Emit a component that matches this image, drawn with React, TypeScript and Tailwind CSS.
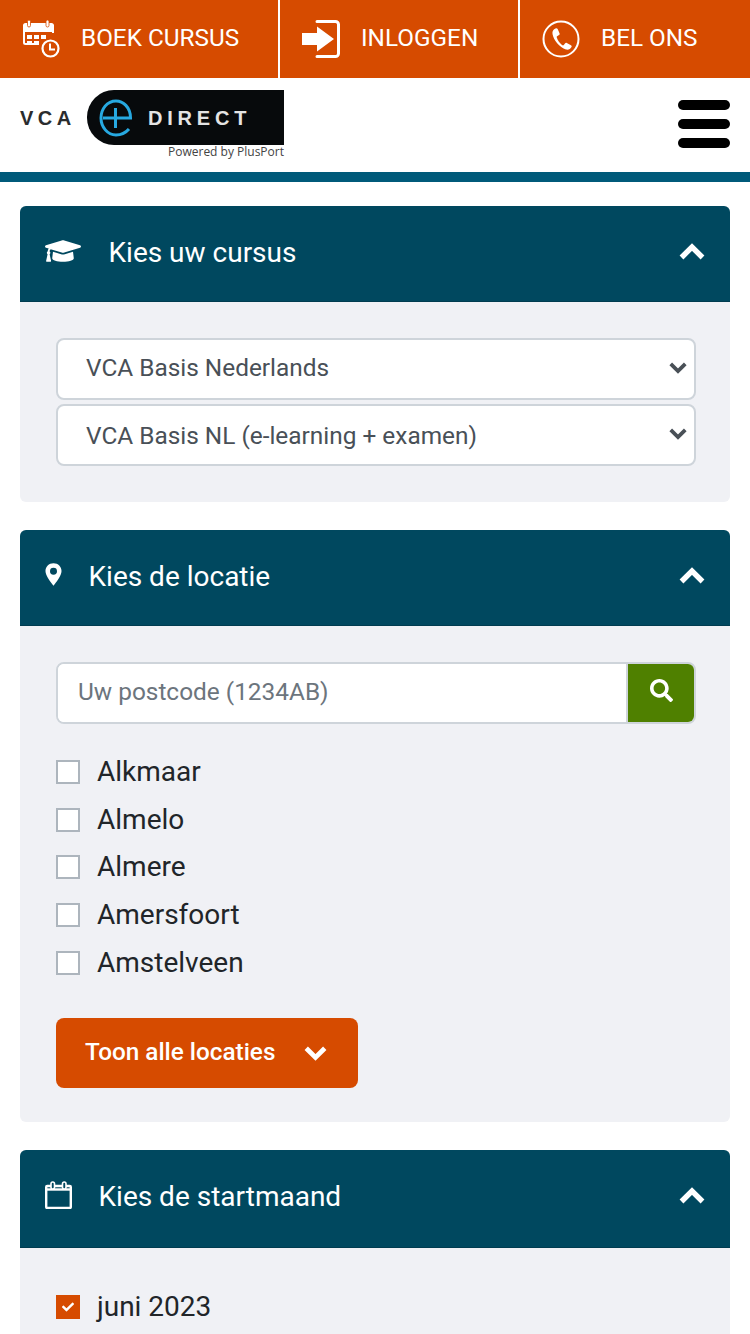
import type { ReactNode } from 'react'
import { FaCheck, FaSearch, FaGraduationCap } from 'react-icons/fa'

function Chevron({ direction, className }: { direction: 'up' | 'down'; className: string }) {
  const d = direction === 'up' ? 'M2.500 14.500L13 4L23.500 14.500' : 'M2.500 2.500L13 13L23.500 2.500'
  return (
    <svg viewBox="0 0 26 17" fill="none" className={className}>
      <path d={d} stroke="currentColor" strokeWidth="5.400" />
    </svg>
  )
}

function CalendarClockIcon() {
  return (
    <svg width="38" height="38" viewBox="0 0 38 38" fill="none" className="shrink-0">
      <path d="M16 24H3.5A1.5 1.5 0 0 1 2 22.5V5.5A1.5 1.5 0 0 1 3.5 4H29.500A1.500 1.500 0 0 1 31 5.500V13" stroke="white" strokeWidth="2" />
      <rect x="1" y="5" width="31" height="7" fill="white" />
      <rect x="5.500" y="0" width="3" height="7" rx="1.500" fill="white" stroke="#d64b00" strokeWidth="0.8" />
      <rect x="24" y="0" width="3" height="7" rx="1.500" fill="white" stroke="#d64b00" strokeWidth="0.8" />
      <rect x="5" y="15" width="5" height="4" fill="white" />
      <rect x="12" y="15" width="5" height="4" fill="white" />
      <rect x="19" y="15" width="5" height="4" fill="white" />
      <rect x="5" y="21" width="5" height="4" fill="white" />
      <rect x="12" y="21" width="5" height="4" fill="white" />
      <circle cx="28.500" cy="28.500" r="8" stroke="white" strokeWidth="2.200" fill="#d64b00" />
      <path d="M28 23.500V29.500H33" stroke="white" strokeWidth="2" />
    </svg>
  )
}

function LoginIcon() {
  return (
    <svg width="38" height="38" viewBox="0 0 38 38" fill="none" className="shrink-0">
      <path d="M15 1.500H33.500A3 3 0 0 1 36.500 4.500V33.500A3 3 0 0 1 33.500 36.500H15" stroke="white" strokeWidth="3" strokeLinecap="round" />
      <path d="M0 13H15V6.500L32 19L15 31.500V25H0Z" fill="white" />
    </svg>
  )
}

function PhoneCircleIcon() {
  return (
    <svg width="38" height="38" viewBox="0 0 38 38" fill="none" className="shrink-0">
      <circle cx="19" cy="19" r="17.500" stroke="white" strokeWidth="2" />
      <path d="M13.500 8.500C11.500 9.500 10 11 10.500 14C11.500 20 17.500 27.500 24 29.500C26.500 30 28.500 29 29.500 27C30 26 29.500 25.500 28.500 25L24.800 23C24 22.600 23.500 22.800 23 23.500L21.800 25C21.300 25.500 20.800 25.500 20 25C17.500 23 15.500 20 14.800 17.500C14.600 16.800 14.800 16.300 15.500 16L17 15C17.700 14.500 17.800 14 17.500 13.200L15.800 9.300C15.300 8.300 14.500 8 13.500 8.500Z" fill="white" />
    </svg>
  )
}

function PinIcon() {
  return (
    <svg width="17" height="25" viewBox="0 0 18 24" className="mb-[6px] shrink-0">
      <path fillRule="evenodd" clipRule="evenodd" d="M9 0C4 0 .5 3.700.5 8.300C.5 13 6 20 9 24C12 20 17.500 13 17.500 8.300C17.500 3.700 14 0 9 0ZM9 4.800A3.700 3.700 0 1 1 9 12.200A3.700 3.700 0 0 1 9 4.800Z" fill="white" />
    </svg>
  )
}

function CalendarIcon() {
  return (
    <svg width="27" height="28" viewBox="0 0 27 28" fill="none" className="mb-[5px] shrink-0">
      <rect x="1.200" y="5" width="24.600" height="22" rx="1" stroke="white" strokeWidth="2.400" />
      <path d="M1 8.500H26" stroke="white" strokeWidth="2.400" />
      <rect x="6" y="1" width="3.500" height="7" rx="1.700" fill="#00485f" stroke="white" strokeWidth="1.600" />
      <rect x="17.500" y="1" width="3.500" height="7" rx="1.700" fill="#00485f" stroke="white" strokeWidth="1.600" />
    </svg>
  )
}

function TopLink({ icon, label, className }: { icon: ReactNode; label: string; className: string }) {
  return (
    <a className={`flex h-full items-center gap-[21px] pl-[22px] ${className}`}>
      {icon}
      <span className="mb-[1px] text-[24.300px] text-white">{label}</span>
    </a>
  )
}

function Logo() {
  return (
    <div className="flex items-start">
      <span className="mt-[16px] w-[67px] font-['Liberation_Sans',sans-serif] text-[20px] leading-6 font-bold tracking-[4.500px] text-[#2a2c2e]">
        VCA
      </span>
      <div>
        <div className="flex h-[55px] w-[197px] items-center rounded-l-[27px] bg-[#070a0c] pl-[12px]">
          <svg width="34" height="44" viewBox="0 0 34 44" fill="none" className="shrink-0">
            <path d="M4 22H31.500C31.500 11 24 5 17 5C8 5 2 13 2 22C2 31 8.500 39 17 39C22 39 26.500 37 30 33" stroke="#27a9e1" strokeWidth="3" />
            <path d="M16.500 12V32" stroke="#27a9e1" strokeWidth="3" />
          </svg>
          <span className="ml-[15px] font-['Liberation_Sans',sans-serif] text-[20px] leading-6 font-bold tracking-[4.800px] text-[#e4e4e4]">
            DIRECT
          </span>
        </div>
        <div className="text-right font-['Open_Sans',sans-serif] text-[12px] leading-[13px] font-normal whitespace-nowrap text-[#444]">
          Powered by PlusPort
        </div>
      </div>
    </div>
  )
}

function Card({
  icon,
  title,
  gap,
  headerClass,
  className,
  children,
}: {
  icon: ReactNode
  title: string
  gap: string
  headerClass: string
  className: string
  children: ReactNode
}) {
  return (
    <section className={`rounded-[6px] bg-[#f0f1f5] ${className}`}>
      <header
        className={`flex items-center justify-between rounded-t-[6px] border-b border-[#003c50] bg-[#00485f] pr-[25px] pl-[25px] ${headerClass}`}
      >
        <div className={`flex items-center ${gap}`}>
          {icon}
          <h2 className="mb-[2px] text-[28px] font-normal text-white">{title}</h2>
        </div>
        <Chevron direction="up" className="mb-[4px] h-[17px] w-[26px] text-white" />
      </header>
      {children}
    </section>
  )
}

function SelectBox({ value, textClass }: { value: string; textClass: string }) {
  return (
    <div className="relative">
      <select
        defaultValue={value}
        className={`h-[62px] w-full appearance-none rounded-[8px] border-2 border-[#ced4da] bg-white pl-[28px] text-[24.400px] text-[#495057] ${textClass}`}
      >
        <option>{value}</option>
      </select>
      <Chevron
        direction="down"
        className="pointer-events-none absolute top-[24px] right-[9px] h-[12px] w-[18px] text-[#495057]"
      />
    </div>
  )
}

function CheckRow({ label, checked = false }: { label: string; checked?: boolean }) {
  return (
    <label className="flex h-[47.700px] items-center gap-[17px] text-[28px] text-[#212529]">
      {checked ? (
        <span className="flex size-[24px] items-center justify-center bg-[#d64b00]">
          <FaCheck className="text-[12px] text-white" />
        </span>
      ) : (
        <span className="size-[24px] border-2 border-[#adb5bd] bg-white" />
      )}
      {label}
    </label>
  )
}

export default function App() {
  const locations = ['Alkmaar', 'Almelo', 'Almere', 'Amersfoort', 'Amstelveen']

  return (
    <div className="h-[1334px] overflow-hidden bg-white font-['Roboto',sans-serif]">
      <nav className="grid h-[78px] grid-cols-[280px_240px_230px] bg-[#d64b00]">
        <TopLink icon={<CalendarClockIcon />} label="BOEK CURSUS" className="border-r-2 border-white" />
        <TopLink icon={<LoginIcon />} label="INLOGGEN" className="border-r-2 border-white" />
        <TopLink icon={<PhoneCircleIcon />} label="BEL ONS" className="" />
      </nav>

      <div className="flex h-[104px] justify-between border-b-[10px] border-[#005a7a] pt-[12px] pr-[20px] pl-[20px]">
        <Logo />
        <div className="mt-[10px] flex h-[48px] w-[52px] flex-col justify-between">
          <span className="h-[10px] rounded-full bg-black" />
          <span className="h-[10px] rounded-full bg-black" />
          <span className="h-[10px] rounded-full bg-black" />
        </div>
      </div>

      <main className="px-[20px] pt-[24px]">
        <Card
          icon={<FaGraduationCap className="mb-[6px] text-[36px] text-white" />}
          title="Kies uw cursus"
          gap="gap-[27.500px]"
          headerClass="h-[96px]"
          className="mb-[28px]"
        >
          <div className="flex flex-col gap-[4px] pt-[36px] pr-[34px] pb-[36px] pl-[36px]">
            <SelectBox value="VCA Basis Nederlands" textClass="pb-[1px]" />
            <SelectBox value="VCA Basis NL (e-learning + examen)" textClass="pt-[3px]" />
          </div>
        </Card>

        <Card
          icon={<PinIcon />}
          title="Kies de locatie"
          gap="gap-[26.500px]"
          headerClass="h-[96px]"
          className="mb-[28px]"
        >
          <div className="pt-[36px] pr-[34px] pb-[34px] pl-[36px]">
            <div className="flex h-[62px] overflow-hidden rounded-[8px] border-2 border-[#ced4da] bg-white">
              <input
                placeholder="Uw postcode (1234AB)"
                className="min-w-0 flex-1 bg-white pb-[2px] pl-[20px] text-[24.400px] text-[#495057] placeholder:text-[#6c757d]"
              />
              <button className="flex w-[68px] items-center justify-center border-l-2 border-[#ced4da] bg-[#4f8000]">
                <FaSearch className="mb-[5px] text-[23px] text-white" />
              </button>
            </div>

            <div className="mt-[24px] flex flex-col">
              {locations.map(l => (
                <CheckRow key={l} label={l} />
              ))}
            </div>

            <button className="mt-[32px] flex h-[70px] w-[302px] items-center gap-[29px] rounded-[8px] bg-[#d64b00] pl-[29px] text-[24.300px] font-medium text-white">
              <span className="mb-[2px]">Toon alle locaties</span>
              <Chevron direction="down" className="h-[15px] w-[23px]" />
            </button>
          </div>
        </Card>

        <Card
          icon={<CalendarIcon />}
          title="Kies de startmaand"
          gap="gap-[26.500px]"
          headerClass="h-[98px] pb-[2px]"
          className=""
        >
          <div className="px-[36px] pt-[35px] pb-[20px]">
            <CheckRow label="juni 2023" checked />
          </div>
        </Card>
      </main>
    </div>
  )
}
